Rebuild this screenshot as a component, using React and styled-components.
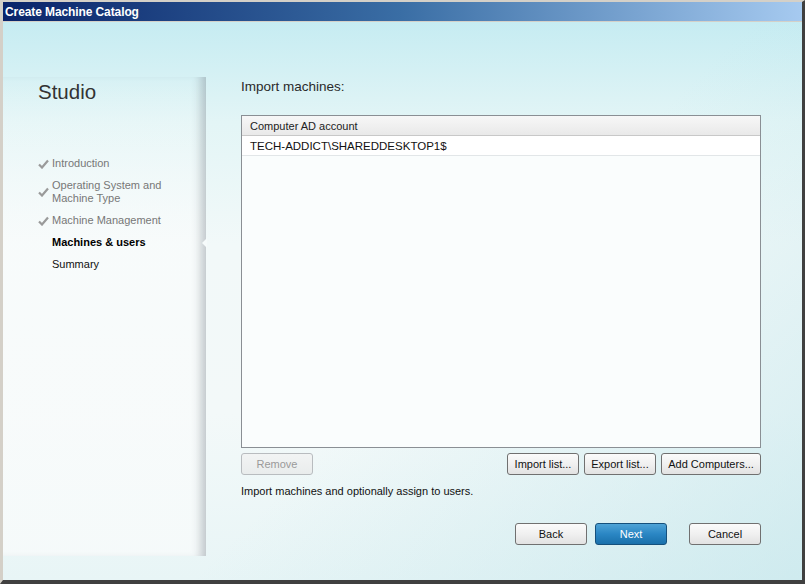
import React from 'react';
import styled, { createGlobalStyle, css } from 'styled-components';

const GlobalStyle = createGlobalStyle`
  html, body {
    margin: 0;
    padding: 0;
    background: #d4d0c8;
  }
  * {
    box-sizing: border-box;
  }
`;

const steps = [
  { id: 0, title: 'Introduction', done: true },
  { id: 1, title: 'Operating System and Machine Type', done: true },
  { id: 2, title: 'Machine Management', done: true },
  { id: 3, title: 'Machines & users', active: true },
  { id: 4, title: 'Summary' },
];

const machines = ['TECH-ADDICT\\SHAREDDESKTOP1$'];

const font = `"Liberation Sans", "DejaVu Sans", sans-serif`;

const Window = styled.div`
  width: 805px;
  height: 584px;
  display: flex;
  flex-direction: column;
  background: #d4d0c8;
  border-top: 2px solid #d4d0c8;
  border-left: 3px solid #d4d0c8;
  border-right: 3px solid #404040;
  border-bottom: 4px solid #404040;
  box-shadow: inset -1px -1px 0 #808080;
  font-family: ${font};
  overflow: hidden;
`;

const TitleBar = styled.div`
  height: 19px;
  display: flex;
  align-items: center;
  padding-left: 2px;
  background: linear-gradient(90deg, #0a246a 0%, #3a6ea5 50%, #a6caf0 100%);
  color: #fff;
  font-size: 12px;
  font-weight: bold;
  letter-spacing: -0.1px;
`;

const Body = styled.div`
  flex: 1;
  display: flex;
  border-top: 1px solid #d4d0c8;
  background:
    linear-gradient(135deg, rgba(255, 255, 255, 0) 55%, rgba(190, 228, 234, 0.6) 100%),
    linear-gradient(180deg, #c6ecf2 0%, #e3f5f6 18%, #f2f9f9 40%, #f3f9f9 70%, #e8f5f6 100%);
`;

const Sidebar = styled.div`
  width: 203px;
  margin-top: 55px;
  margin-bottom: 24px;
  padding: 3px 0 0 35px;
  background: linear-gradient(180deg, rgba(255, 255, 255, 0) 0%, rgba(250, 252, 252, 0.7) 35%, rgba(248, 251, 251, 0.8) 100%);
  box-shadow: inset -11px 0 10px -6px rgba(110, 120, 130, 0.4);
`;

const Brand = styled.h1`
  margin: 0 0 53px;
  font-size: 20.5px;
  font-weight: normal;
  color: #333;
  line-height: 24px;
`;

const StepList = styled.ul`
  list-style: none;
  margin: 0;
  padding: 0;
`;

const Step = styled.li`
  position: relative;
  display: flex;
  align-items: center;
  margin-bottom: 9px;
  padding-left: 14px;
  font-size: 11px;
  line-height: 13px;
  color: #777;

  ${({ $active }) => $active && css`
    color: #000;
    font-weight: bold;
  `}
  ${({ $pending }) => $pending && css`
    color: #111;
  `}
`;

const Check = styled.svg`
  position: absolute;
  left: 0;
  top: 50%;
  margin-top: -5px;
  width: 11px;
  height: 10px;
`;

const Notch = styled.span`
  position: absolute;
  right: -1px;
  top: 50%;
  margin-top: -5px;
  width: 0;
  height: 0;
  border-top: 5px solid transparent;
  border-bottom: 5px solid transparent;
  border-right: 5px solid #f6fbfb;
`;

const StepText = styled.span`
  flex: 1;
  padding-right: 34px;
`;

const Main = styled.div`
  flex: 1;
  display: flex;
  flex-direction: column;
  padding: 56px 41px 0 35px;
`;

const Heading = styled.h2`
  margin: 0 0 19px;
  font-size: 13.5px;
  font-weight: normal;
  color: #2a2a2a;
  line-height: 18px;
`;

const Table = styled.div`
  height: 333px;
  border: 1px solid #8a8f94;
  background: #fafdfd;
  display: flex;
  flex-direction: column;
`;

const HeaderRow = styled.div`
  height: 20px;
  display: flex;
  align-items: center;
  padding-left: 8px;
  font-size: 11px;
  color: #222;
  background: linear-gradient(180deg, #f7f7f7 0%, #e9e9e9 100%);
  border-bottom: 1px solid #c8c8c8;
`;

const Row = styled.div`
  height: 20px;
  display: flex;
  align-items: center;
  padding-left: 8px;
  font-size: 11.5px;
  color: #111;
  background: #fff;
  border-bottom: 1px solid #e2e6e8;
`;

const ButtonBar = styled.div`
  display: flex;
  gap: 5px;
  margin-top: 5px;
`;

const Spacer = styled.div`
  flex: 1;
`;

const Button = styled.button`
  height: 22px;
  width: ${({ $width }) => $width || 72}px;
  padding: 0;
  font-family: ${font};
  font-size: 11px;
  color: #111;
  border: 1px solid #707070;
  border-radius: 3px;
  background: linear-gradient(180deg, #fbfbfb 0%, #f0f0f0 50%, #e2e2e2 100%);
  cursor: pointer;

  &:disabled {
    color: #9a9a9a;
    border-color: #b8bcbf;
    background: linear-gradient(180deg, #f2f4f4 0%, #e9ecec 100%);
    cursor: default;
  }

  ${({ $primary }) => $primary && css`
    color: #fff;
    border-color: #15507c;
    background: linear-gradient(180deg, #4ea3d6 0%, #2a86c4 50%, #1a70ab 100%);
  `}
`;

const Hint = styled.p`
  margin: 10px 0 0;
  font-size: 11px;
  color: #111;
`;

const Footer = styled.div`
  display: flex;
  gap: 8px;
  margin-top: 26px;
  justify-content: flex-end;

  & > :last-child {
    margin-left: 14px;
  }
`;

const CheckIcon = () => (
  <Check viewBox="0 0 11 10">
    <path d="M1 5.5 L4 8.5 L10 1.5" fill="none" stroke="#9a9a9a" strokeWidth="2.2" />
  </Check>
);

const App = () => (
  <>
    <GlobalStyle />
    <Window>
      <TitleBar>Create Machine Catalog</TitleBar>
      <Body>
        <Sidebar>
          <Brand>Studio</Brand>
          <StepList>
            {steps.map((step) => (
              <Step key={step.id} $active={step.active} $pending={!step.done && !step.active}>
                {step.done && <CheckIcon />}
                <StepText>{step.title}</StepText>
                {step.active && <Notch />}
              </Step>
            ))}
          </StepList>
        </Sidebar>
        <Main>
          <Heading>Import machines:</Heading>
          <Table>
            <HeaderRow>Computer AD account</HeaderRow>
            {machines.map((name) => (
              <Row key={name}>{name}</Row>
            ))}
          </Table>
          <ButtonBar>
            <Button disabled>Remove</Button>
            <Spacer />
            <Button>Import list...</Button>
            <Button>Export list...</Button>
            <Button $width={100}>Add Computers...</Button>
          </ButtonBar>
          <Hint>Import machines and optionally assign to users.</Hint>
          <Footer>
            <Button>Back</Button>
            <Button $primary>Next</Button>
            <Button>Cancel</Button>
          </Footer>
        </Main>
      </Body>
    </Window>
  </>
);

export default App;
